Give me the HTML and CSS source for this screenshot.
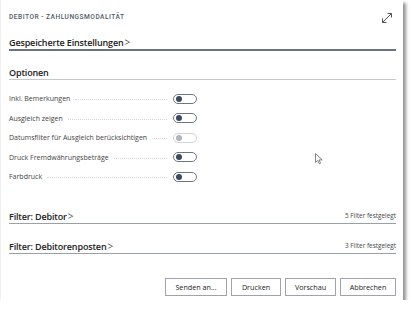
FILE: index.html
```html
<!DOCTYPE html>
<html lang="de">
<head>
    <meta charset="UTF-8">
    <title>Debitor - Zahlungsmodalität</title>
    <link rel="stylesheet" href="styles.css">
</head>
<body>
    <div class="dialog">
        <div class="dialog-header">
            <span class="dialog-title">Debitor - Zahlungsmodalität</span>
            <svg class="expand-icon" width="12" height="12" viewBox="0 0 12 12">
                <path d="M1.5 10.5 L10.5 1.5 M6.5 1.5 H10.5 V5.5 M1.5 6.5 V10.5 H5.5" fill="none" stroke="#555" stroke-width="1"/>
            </svg>
        </div>

        <div class="section-head strong">
            <span class="section-title">Gespeicherte Einstellungen<span class="chev">&gt;</span></span>
        </div>

        <div class="section-head options">
            <span class="section-title">Optionen</span>
        </div>

        <div class="option-list">
            <div class="option-row">
                <span class="option-label">Inkl. Bemerkungen</span>
                <span class="leader"></span>
                <span class="toggle"><span class="knob"></span></span>
            </div>
            <div class="option-row">
                <span class="option-label">Ausgleich zeigen</span>
                <span class="leader"></span>
                <span class="toggle"><span class="knob"></span></span>
            </div>
            <div class="option-row">
                <span class="option-label">Datumsfilter für Ausgleich berücksichtigen</span>
                <span class="leader"></span>
                <span class="toggle disabled"><span class="knob"></span></span>
            </div>
            <div class="option-row">
                <span class="option-label">Druck Fremdwährungsbeträge</span>
                <span class="leader"></span>
                <span class="toggle"><span class="knob"></span></span>
            </div>
            <div class="option-row">
                <span class="option-label">Farbdruck</span>
                <span class="leader"></span>
                <span class="toggle"><span class="knob"></span></span>
            </div>
        </div>

        <div class="section-head filter first">
            <span class="section-title">Filter: Debitor<span class="chev">&gt;</span></span>
            <span class="filter-count">5 Filter festgelegt</span>
        </div>

        <div class="section-head filter">
            <span class="section-title">Filter: Debitorenposten<span class="chev">&gt;</span></span>
            <span class="filter-count">3 Filter festgelegt</span>
        </div>

        <div class="button-bar">
            <button class="btn btn-send">Senden an...</button>
            <button class="btn btn-print">Drucken</button>
            <button class="btn btn-preview">Vorschau</button>
            <button class="btn btn-cancel">Abbrechen</button>
        </div>

        <svg class="cursor" width="9" height="12" viewBox="0 0 9 12">
            <path d="M0.5 0.5 V9.5 L2.8 7.4 L4.3 10.8 L5.6 10.2 L4.1 6.9 L7.2 6.9 Z" fill="#fff" stroke="#666" stroke-width="0.8"/>
        </svg>
    </div>
</body>
</html>
```

FILE: styles.css
```css
body {
    margin: 0;
    background: #fff;
    font-family: "Open Sans", "Noto Sans", sans-serif;
    color: #212121;
}

.dialog {
    position: relative;
    width: 403px;
    height: 300px;
    box-sizing: border-box;
    padding: 0 7px 0 8px;
    background: #fff;
    border-left: 1px solid #f0f0f0;
    box-shadow: 3px 3px 3px rgba(0, 0, 0, 0.42);
}

.dialog-header {
    height: 35px;
    display: flex;
    justify-content: space-between;
    align-items: flex-start;
    padding-top: 12px;
    box-sizing: border-box;
}

.dialog-title {
    font-family: Roboto, sans-serif;
    font-size: 6.6px;
    font-weight: 500;
    line-height: 10px;
    text-transform: uppercase;
    letter-spacing: 0.5px;
    color: #505a66;
}

.expand-icon {
    margin-right: 3px;
}

.section-head {
    display: flex;
    justify-content: space-between;
    align-items: center;
    height: 14px;
    border-bottom: 1px solid #c4c8cc;
}

.section-head.strong {
    border-bottom: 2px solid #6a737d;
}

.section-head.options {
    margin-top: 14px;
}

.section-head.filter {
    margin-top: 15px;
    border-bottom: 1px solid #9aa0a7;
}

.section-head.filter.first {
    margin-top: 22px;
}

.section-title {
    font-size: 9px;
    font-weight: 600;
    color: #212121;
    letter-spacing: -0.15px;
}

.chev {
    font-weight: 400;
    color: #555;
    margin-left: 1px;
    font-size: 10px;
}

.filter-count {
    font-size: 6.4px;
    color: #444;
}

.option-list {
    margin-top: 9px;
    width: 188px;
}

.option-row {
    display: flex;
    align-items: center;
    height: 19.5px;
}

.option-label {
    font-size: 7px;
    color: #444;
    white-space: nowrap;
}

.leader {
    flex: 1;
    margin: 2px 6px 0 5px;
    border-bottom: 1px dotted #d2d5d8;
}

.toggle {
    width: 20px;
    height: 8px;
    border: 1px solid #6e7780;
    border-radius: 5px;
    display: flex;
    align-items: center;
    padding-left: 2px;
    box-sizing: content-box;
}

.knob {
    width: 6px;
    height: 6px;
    border-radius: 50%;
    background: #3b4a5e;
}

.toggle.disabled {
    border-color: #cfd3d7;
}

.toggle.disabled .knob {
    background: #aeb4bb;
}

.button-bar {
    display: flex;
    justify-content: flex-end;
    gap: 4px;
    margin-top: 24px;
}

.btn {
    height: 18px;
    box-sizing: border-box;
    background: #fff;
    border: 1px solid #a0a4a8;
    font-family: "Open Sans", "Noto Sans", sans-serif;
    font-size: 7.2px;
    color: #222;
    padding: 0;
}

.btn-send { width: 62px; }
.btn-print { width: 50px; }
.btn-preview { width: 51px; }
.btn-cancel { width: 56px; }

.cursor {
    position: absolute;
    left: 314px;
    top: 153px;
}
```
